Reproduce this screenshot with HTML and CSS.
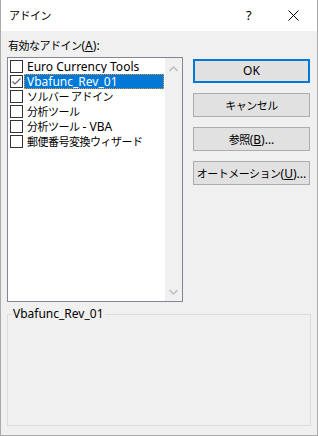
FILE: index.html
```html
<!DOCTYPE html>
<html lang="ja">
<head>
<meta charset="utf-8">
<link rel="stylesheet" href="styles.css">
</head>
<body>
<div class="window">
  <div class="titlebar">
    <span class="title"><span class="jp">アドイン</span></span>
    <span class="help">?</span>
    <span class="close">
      <svg width="11" height="11" viewBox="0 0 11 11"><path d="M0.5 0.5 L10.5 10.5 M10.5 0.5 L0.5 10.5" stroke="#000" stroke-width="1" fill="none"/></svg>
    </span>
  </div>
  <div class="content">
    <div class="main">
      <div class="leftcol">
        <div class="label"><span class="jp">有効なアドイン</span>(<u>A</u>):</div>
        <div class="listbox">
          <div class="items">
            <div class="row"><span class="cb"></span><span class="text">Euro Currency Tools</span></div>
            <div class="row"><span class="cb checked"><svg width="11" height="11" viewBox="0 0 11 11"><path d="M1.5 5.5 L4 8 L9.5 2.5" stroke="#666" stroke-width="1.2" fill="none"/></svg></span><span class="text selected">Vbafunc_Rev_01</span></div>
            <div class="row"><span class="cb"></span><span class="text"><span class="jp">ソルバー アドイン</span></span></div>
            <div class="row"><span class="cb"></span><span class="text"><span class="jp">分析ツール</span></span></div>
            <div class="row"><span class="cb"></span><span class="text"><span class="jp">分析ツール</span>&nbsp;-&nbsp;VBA</span></div>
            <div class="row"><span class="cb"></span><span class="text"><span class="jp">郵便番号変換ウィザード</span></span></div>
          </div>
          <div class="scrollbar">
            <svg width="9" height="6" viewBox="0 0 9 6"><path d="M0.5 5 L4.5 1 L8.5 5" stroke="#c2c2c2" stroke-width="1.6" fill="none"/></svg>
            <svg width="9" height="6" viewBox="0 0 9 6"><path d="M0.5 1 L4.5 5 L8.5 1" stroke="#c2c2c2" stroke-width="1.6" fill="none"/></svg>
          </div>
        </div>
      </div>
      <div class="buttons">
        <div class="btn default"><span class="btxt">OK</span></div>
        <div class="btn"><span class="btxt"><span class="jp">キャンセル</span></span></div>
        <div class="btn"><span class="btxt"><span class="jp">参照</span>(<u>B</u>)...</span></div>
        <div class="btn"><span class="btxt"><span class="jp">オートメーション</span>(<u>U</u>)...</span></div>
      </div>
    </div>
    <fieldset class="group">
      <legend>Vbafunc_Rev_01</legend>
    </fieldset>
  </div>
</div>
</body>
</html>
```
FILE: styles.css
```css
html, body {
  margin: 0;
  padding: 0;
  background: #ffffff;
}
.window {
  width: 318px;
  height: 436px;
  box-sizing: border-box;
  border: 1px solid #aaaaaa;
  border-top: none;
  display: flex;
  flex-direction: column;
  font-family: "Noto Sans", "Noto Sans CJK JP", sans-serif;
  font-size: 12px;
  color: #000;
}
.jp {
  font-family: "Noto Sans CJK JP", sans-serif;
  font-size: 11px;
  letter-spacing: -0.5px;
}
.titlebar {
  height: 31px;
  background: #ffffff;
  display: flex;
  align-items: center;
  flex-shrink: 0;
}
.title {
  padding-left: 8px;
  flex: 1;
  line-height: 16px;
  margin-top: -1px;
}
.help {
  width: 12px;
  font-size: 13px;
  margin-right: 30px;
  margin-top: -1px;
}
.close {
  width: 11px;
  height: 11px;
  margin-right: 18px;
  margin-top: -1px;
  display: flex;
}
.content {
  flex: 1;
  background: #f0f0f0;
  padding: 6px 7px 0 6px;
  display: flex;
  flex-direction: column;
}
.main {
  display: flex;
}
.leftcol {
  display: flex;
  flex-direction: column;
}
.label {
  line-height: 16px;
  height: 16px;
  margin-bottom: 4px;
  padding-left: 1px;
  white-space: nowrap;
}
.listbox {
  width: 176px;
  height: 245px;
  box-sizing: border-box;
  border: 1px solid #828790;
  background: #ffffff;
  display: flex;
}
.items {
  flex: 1;
  padding-top: 1px;
  display: flex;
  flex-direction: column;
}
.row {
  height: 15px;
  display: flex;
  align-items: center;
}
.cb {
  width: 13px;
  height: 13px;
  box-sizing: border-box;
  border: 1px solid #333333;
  background: #fff;
  margin-left: 2px;
  margin-right: 1px;
  display: flex;
  align-items: center;
  justify-content: center;
}
.text {
  flex: 1;
  height: 15px;
  box-sizing: border-box;
  line-height: 13px;
  padding-left: 2px;
  margin-right: 1px;
  white-space: nowrap;
  border: 1px solid transparent;
  overflow: hidden;
}
.text.selected {
  background: #0078d7;
  color: #ffffff;
  border: 1px dotted #e8923a;
}
.scrollbar {
  width: 17px;
  background: #f0f0f0;
  display: flex;
  flex-direction: column;
  justify-content: space-between;
  align-items: center;
  padding: 8px 0 6px;
  box-sizing: border-box;
}
.buttons {
  display: flex;
  flex-direction: column;
  gap: 10px;
  padding-top: 22px;
  margin-left: 10px;
}
.btn {
  width: 117px;
  height: 24px;
  box-sizing: border-box;
  border: 1px solid #adadad;
  background: #e1e1e1;
  display: flex;
  align-items: center;
  justify-content: center;
}
.btxt {
  white-space: nowrap;
  line-height: 16px;
}
.btn.default {
  border: 2px solid #0078d7;
}
.group {
  margin: 4px 0 0 0;
  padding: 0;
  height: 120px;
  box-sizing: border-box;
  border: 1px solid #dcdcdc;
  width: 304px;
}
.group legend {
  padding: 0 1px;
  margin-left: 4px;
  line-height: 16px;
}
```
